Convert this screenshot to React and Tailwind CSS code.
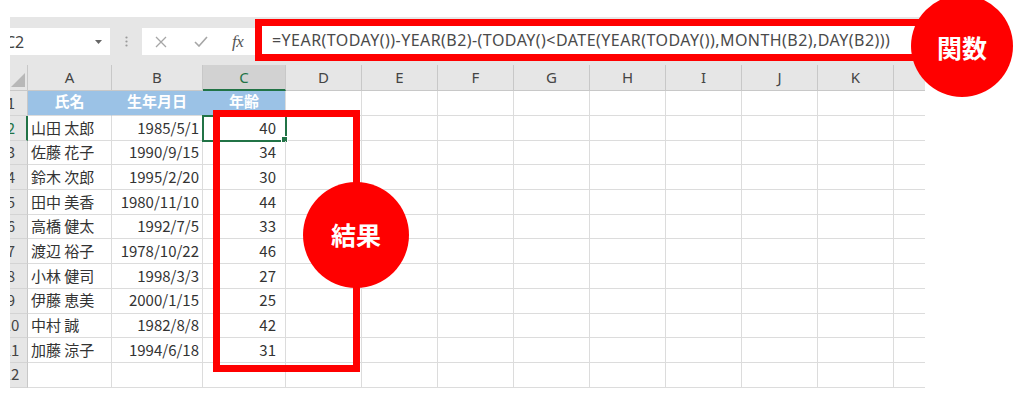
const rows = [
  ["山田 太郎", "1985/5/1", 40],
  ["佐藤 花子", "1990/9/15", 34],
  ["鈴木 次郎", "1995/2/20", 30],
  ["田中 美香", "1980/11/10", 44],
  ["高橋 健太", "1992/7/5", 33],
  ["渡辺 裕子", "1978/10/22", 46],
  ["小林 健司", "1998/3/3", 27],
  ["伊藤 恵美", "2000/1/15", 25],
  ["中村 誠", "1982/8/8", 42],
  ["加藤 涼子", "1994/6/18", 31],
];

const cols = ["A", "B", "C", "D", "E", "F", "G", "H", "I", "J", "K", "L"];
const widths = ["w-[84px]", "w-[91px]", "w-[83px]", "w-[76px]", "w-[76px]", "w-[76px]", "w-[76px]", "w-[76px]", "w-[76px]", "w-[76px]", "w-[76px]", "w-[76px]"];

function RowHead({ n, active }) {
  return (
    <div
      className={`w-[18px] shrink-0 overflow-hidden bg-[#e6e6e6] border-b border-[#d4d4d4] flex items-center ${
        active ? "border-r-2 border-r-[#217346] text-[#217346]" : "border-r border-r-[#c8c8c8] text-[#444]"
      }`}
    >
      <div className="w-[24px] shrink-0 ml-[-11px] text-center text-[15px]">{n}</div>
    </div>
  );
}

function Cell({ w, children, className = "" }) {
  return (
    <div className={`${w} shrink-0 border-r border-b border-[#dcdcdc] flex items-center text-[15px] text-[#333] whitespace-nowrap overflow-hidden ${className}`}>
      {children}
    </div>
  );
}

export default function App() {
  return (
    <div className="w-[1024px] h-[398px] bg-white relative overflow-hidden font-['Noto_Sans_CJK_JP','Noto_Sans',sans-serif]">
      <div className="pt-[17px] pl-[10px]">
        <div className="w-[915px] overflow-hidden">
          {/* toolbar */}
          <div className="h-[48px] bg-[#e6e6e6] flex items-start">
            <div className="w-[100px] h-[27px] mt-[11px] bg-white shrink-0 flex items-center justify-between pr-[8px] overflow-hidden">
              <span className="ml-[-5px] text-[16px] text-[#444] font-['Noto_Sans',sans-serif]">C2</span>
              <svg width="7" height="4" viewBox="0 0 7 4"><path d="M0 0h7L3.5 4z" fill="#666" /></svg>
            </div>
            <div className="w-[32px] h-[27px] mt-[11px] shrink-0 flex items-center justify-center">
              <svg width="3" height="11" viewBox="0 0 3 11">
                <circle cx="1.5" cy="1.5" r="1.1" fill="#9a9a9a" />
                <circle cx="1.5" cy="5.5" r="1.1" fill="#9a9a9a" />
                <circle cx="1.5" cy="9.5" r="1.1" fill="#9a9a9a" />
              </svg>
            </div>
            <div className="w-[113px] h-[27px] mt-[11px] bg-white shrink-0 flex items-center">
              <svg className="ml-[13px]" width="12" height="12" viewBox="0 0 12 12">
                <path d="M1 1l10 10M11 1L1 11" stroke="#a6a6a6" strokeWidth="1.3" />
              </svg>
              <svg className="ml-[27px]" width="14" height="11" viewBox="0 0 14 11">
                <path d="M1 6l4 4 8-9" stroke="#a6a6a6" strokeWidth="1.6" fill="none" />
              </svg>
              <span className="ml-[24px] text-[17px] italic text-[#555] font-['Liberation_Serif',serif] tracking-[-0.5px]">fx</span>
            </div>
            <div className="w-[690px] h-[42px] mt-[2px] shrink-0 bg-white border-[7px] border-[#f00] flex items-center pl-[10px]">
              <span className="text-[16px] tracking-[0.45px] text-[#4a4a4a] whitespace-nowrap font-['Noto_Sans',sans-serif] leading-none">
                =YEAR(TODAY())-YEAR(B2)-(TODAY()&lt;DATE(YEAR(TODAY()),MONTH(B2),DAY(B2)))
              </span>
            </div>
          </div>

          {/* column headers */}
          <div className="flex h-[26px]">
            <div className="w-[18px] shrink-0 bg-[#e6e6e6] border-r border-b border-[#c8c8c8] flex items-end justify-end pb-[3px] pr-[2px]">
              <svg width="14" height="14" viewBox="0 0 14 14"><path d="M14 0V14H0z" fill="#b8b8b8" /></svg>
            </div>
            {cols.map((c, i) => (
              <div
                key={c}
                className={`${widths[i]} shrink-0 flex items-center justify-center text-[15px] font-['Noto_Sans',sans-serif] border-r border-[#c8c8c8] ${
                  c === "C"
                    ? "bg-[#d2d2d2] text-[#217346] border-b-2 border-b-[#217346]"
                    : "bg-[#e6e6e6] text-[#444] border-b border-b-[#c8c8c8]"
                }`}
              >
                {c}
              </div>
            ))}
          </div>

          {/* row 1 */}
          <div className="flex h-[25px]">
            <RowHead n={1} />
            <Cell w={widths[0]} className="bg-[#9bc2e6] border-r-[#9bc2e6] justify-center text-white font-bold pb-[4px]">氏名</Cell>
            <Cell w={widths[1]} className="bg-[#9bc2e6] border-r-[#9bc2e6] justify-center text-white font-bold pb-[4px]">生年月日</Cell>
            <Cell w={widths[2]} className="bg-[#9bc2e6] justify-center text-white font-bold pb-[4px]">年齢</Cell>
            {widths.slice(3).map((w, i) => (
              <Cell key={i} w={w} />
            ))}
          </div>

          {rows.map((r, idx) => (
            <div key={idx} className="flex h-[24.7px]">
              <RowHead n={idx + 2} active={idx === 0} />
              <Cell w={widths[0]} className="pl-[3px]">{r[0]}</Cell>
              <Cell w={widths[1]} className="justify-end pr-[3px]">{r[1]}</Cell>
              <Cell w={widths[2]} className={`justify-end pr-[9px] relative overflow-visible ${idx === 0 ? "outline-2 outline-[#217346] -outline-offset-1" : ""}`}>
                {r[2]}
                {idx === 0 && <span className="absolute right-[-3px] bottom-[-3px] w-[5px] h-[5px] bg-[#217346] border border-white box-content"></span>}
              </Cell>
              {widths.slice(3).map((w, i) => (
                <Cell key={i} w={w} />
              ))}
            </div>
          ))}

          <div className="flex h-[24.7px]">
            <RowHead n={12} />
            {widths.map((w, i) => (
              <Cell key={i} w={w} />
            ))}
          </div>
        </div>
      </div>

      {/* annotations */}
      <div className="absolute left-[213px] top-[110px] w-[147px] h-[262px] border-[7px] border-[#f00]"></div>
      <div className="absolute left-[303px] top-[182px] w-[106px] h-[106px] rounded-full bg-[#f00] flex items-center justify-center text-white text-[25px] font-bold">
        結果
      </div>
      <div className="absolute left-[911px] top-[-5px] w-[102px] h-[102px] rounded-full bg-[#f00] flex items-center justify-center text-white text-[25px] font-bold pt-[4px]">
        関数
      </div>
    </div>
  );
}
